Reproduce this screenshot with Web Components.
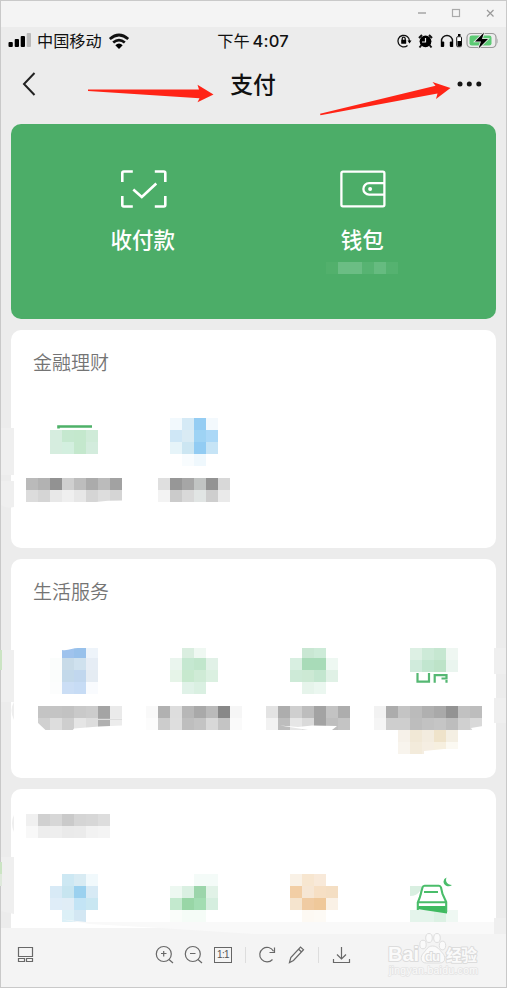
<!DOCTYPE html>
<html lang="zh-CN">
<head>
<meta charset="utf-8">
<title>支付</title>
<style>
html,body{margin:0;padding:0}
body{width:507px;height:988px;overflow:hidden;font-family:"Noto Sans CJK SC",sans-serif}
</style>
</head>
<body>
<viewer-window></viewer-window>
<script>
function define(name, html, after) {
  customElements.define(name, class extends HTMLElement {
    constructor() {
      super();
      this.attachShadow({mode: 'open'}).innerHTML = html;
    }
    connectedCallback() { if (after) after.call(this, this.shadowRoot); }
  });
}

/* Censored tiles: each line is "x y colour colour ..." on a 12px cell grid; "-" skips a cell. */
const CELL = 12;
const PATCHES = {
  wallet: '326 262 #52b06c #6bbd84 #6bbd84 #57b372 #66bb80 #55b270',
  a1: `50 430 #d6eddf #c5e8cf #c4e8cd #cfebd8;50 442 #d6eddf #d3efdf #c4e8cd #d3ecdd;
       26 478 #bababa #b2b2b2 #929292 #cfcfcf #bdbdbd #ababab #bbbbbb #a2a2a2;
       26 490 #dcdcdc #d5d5d5 #e8e8e8 #efefef #e7e7e7 #d5d5d5 #dddddd #d5d5d5`,
  a2: `170 418 #f2f9fd #d5eaf6 #95cdf3 #f3f9fd;170 430 #cfe7f6 #d9ebf4 #9ed3f4 #abd8f7;
       170 442 #e6f4f9 #cce6f2 #92ccf3 #c6e4f6;182 454 #f8fcfe #eff8fd;
       158 478 #dfdfdf #979797 #a6a6a6 #c1c4c3 #939393 #d8d8d8;
       158 490 #f3f3f3 #cbcbcb #d9d9d9 #e1e5e4 #cecece #eaeaea`,
  b1: `50 646 - #9fc3ed #98c1eb #eef4fa;50 658 #fbfdfc #c8dbe8 #cfe1ee #e6edf5;
       50 670 #fbfdfc #c3d9ea #c1d7ee #e5ecf3;50 682 #fcfdfd #cbdef5 #c7dcf5 #f9fbfe;
       38 706 #c4c4c4 #c4c4c4 #c2c2c2 #c9c9c9 #cccccc #a4a4a4 #eaeaea;
       38 718 #d0d0d0 #dddddd #cecece #e5e5e5 #dddddd #b0b0b0 #ececec`,
  b2: `182 648 #daeee0 #eff8f2;170 658 #eaf5ee #c5e8d1 #c1e6cc #e1f1e7;
       170 670 #e6f4e8 #c7e9ce #cfebd6 #dbf0e1;182 682 #e0f2e8 #daf0e2;
       146 706 #f9f9f9 #b1b1b1 #dddddd #b7b7b7 #a9a9a9 #bababa #888888 #f6f6f6;
       146 718 #fcfcfc #cccccc #dedede #bebebe #c3c3c3 #d8d8d8 #c4c4c4 #fafafa`,
  b3: `302 648 #c9e7d3 #cdebd8;290 658 #d8efe1 #a8dbb8 #a8dbb8 #eef8f2;
       290 670 #cdead7 #cce9d4 #c3e6cf #e0f1e6;302 682 #e6f4eb #ebf7f0;
       266 706 #e3e3e3 #adadad #cfcfcf #bdbdbd #a3a3a3 #c3c3c3 #adadad;
       266 718 #f2f2f2 #bdbdbd #e6e6e6 #dadada #a3a3a3 #bebebe #c4c4c4`,
  b4: `410 648 #ddf0e4 #cdead8 #c6e7d1 #eff7f2;410 660 #d0ebdc #c1e6cf #bde3c8 #eaf5ef;
       374 706 #f2f2f2 #acacac #c4c4c4 #bbbbbb #b0b0b0 #a9a9a9 #939393 #c1c1c1 #bdbdbd;
       374 718 #f5f5f5 #cecece #cecece #bdbdbd #c2c2c2 #c5c5c5 #bdbdbd #d0d0d0 #d9d9d9;
       398 730 #f6f1e9 #f1e8d6 #f3ecdf #efe3ca #f4efe3;398 742 #f8f4ed #f3ebdb #f5eee2 #f6efdf #fbf9f2`,
  heading: `26 814 #f0f0f0 #d0d0d0 #d7d7d7 #cacaca #d5d5d5 #d7d7d7 #dddddd;
       26 826 #f8f8f8 #ededed #eeeeee #eaeaea #ebebeb #f2f2f2 #f4f4f4`,
  c1: `62 874 #cde8f3 #d8ebf3 #f1f9fc;50 886 #d8eaf6 #c7e5f0 #9bd1ef #d7eaf5;
       50 898 #dfedf8 #e0edf6 #c3e4f5 #c9e7f2;62 910 #dcf0f7 #d3e7f3`,
  c2: `194 874 #f4fbf8 #f4fbf8;170 886 #edf8f1 #daf0e2 #9cd5ab #e1f2e7;
       170 898 #c3e9ce #98d6a6 #a2ddb2 #d5eedf;170 910 #fafdfa #f5fcf7 #f5fcf7`,
  c3: `290 874 #f9f1e6 #f7e6d0 #f8e9d9;290 886 #f2cea5 #f6e6d4 #f6dfc4 #f4dec3;
       290 898 #f5e4ce #f0cba2 #efc89a #faf1e6;302 910 #fdf9f3 #fdfaf5`,
  c4: `410 886 #d9efe1;410 910 #e4f4eb #e4f4eb #dcf1e4 #eff8f3`
};
const EXTRAS = {
  a1: '<path d="M58.500 428.500v-2H92" fill="none" stroke="#4eb168" stroke-width="2.600"/><path d="M96 502l12-1.300 15-.3v3H96z" fill="#fff"/>',
  b1: '<path d="M60 645h38v3H78c-5 0-10 3-16 2z" fill="#fff"/><path d="M37 722l9 8.500h-9zM72 731l2-2.500 25-2 23-1v6z" fill="#fff"/><path d="M92 719.500h30" stroke="#ddd"/>',
  b3: '<path d="M280 725.500l18 1.500 14-1.500 25 .5-5 4h-24l-6-1z" fill="#fff"/>',
  b4: '<g fill="none" stroke="#55b873" stroke-width="2.200"><path d="M417.500 673v8.700h11.500V673M434.700 682.800v-7.700h12.500M446.500 674v4.500h-5M446.500 680v2.800"/></g><path d="M471 728l12-2v5h-10zM424 754v-3l20-2h16v6z" fill="#fff"/>',
  c4: '<path d="M422 885v10q-4 2-12 3h12z" fill="#fff"/><path d="M410 898v-2q7 0 10-5v7z" fill="#fff"/><path d="M417 909l30 4.500v-7.500h-30z" fill="#3fba60"/><g fill="none" stroke="#4abd6a" stroke-width="2.100"><path d="M417.800 910v-7.500l2-5 2.700-10q.5-1.800 2-1.800h14.500q1.500 0 2 1.800l1.500 6.500 3.700 8v10M424 892h14M418.500 902.300h27"/></g><path d="M446.500 877.500c-1.500 4 .5 7 5.500 7.500-3 2.500-8.500 1-8.500-3.500q.2-3 3-4z" fill="#4abd6a"/>'
};

define('mosaic-patch', `<style>:host{display:block}svg{display:block}</style><svg></svg>`, function (root) {
  const name = this.getAttribute('name');
  const box = this.getAttribute('box').split(' ');
  const svg = root.querySelector('svg');
  svg.setAttribute('viewBox', box.join(' '));
  svg.setAttribute('width', box[2]);
  svg.setAttribute('height', box[3]);
  svg.innerHTML = '<g shape-rendering="crispEdges">' + PATCHES[name].split(';').map(line => {
    const [x, y, ...colours] = line.trim().split(/\s+/);
    return colours.map((c, i) => c === '-' ? '' :
      `<rect x="${+x + i * CELL}" y="${y}" width="12" height="12" fill="${c}"/>`).join('');
  }).join('') + '</g>' + (EXTRAS[name] || '');
});

define('title-bar', `
<style>:host{display:block;height:26px;background:#f4f4f4}
div{display:flex;justify-content:flex-end;padding-right:9px;height:24px;align-items:center}
svg{display:block}</style>
<div><svg width="84" height="24" viewBox="413 1 84 24" fill="none" stroke="#aaa">
<path d="M418 13h8" stroke-width="1.600"/><rect x="452.500" y="9.500" width="7" height="7" stroke-width="1.200"/><path d="M487 10l6.500 6.500M493.500 10L487 16.500" stroke="#999" stroke-width="1.200"/></svg></div>`);

define('status-bar', `
<style>:host{display:grid;grid-template-columns:1fr auto 1fr;align-items:center;height:28px;padding:0 8px 0 7px;color:#111;font-size:16.2px;line-height:28px}
.l{display:flex;align-items:center}.l span{margin:-2px 6px 0 6px}.m{margin-top:-3px}.r{justify-self:end}svg{display:block}
b{font:500 16.500px Inter,"Noto Sans CJK SC",sans-serif;letter-spacing:.15px;margin-left:3px}</style>
<div class="l"><svg width="23" height="16" viewBox="8 33 23 16"><rect x="8.500" y="42" width="4.300" height="5" rx="1"/><rect x="14.700" y="39" width="4.300" height="8" rx="1"/><rect x="20.700" y="36" width="4.300" height="11" rx="1"/><rect x="26.700" y="33" width="4.300" height="14" rx="1" fill="#bbb"/></svg>
<span>中国移动</span>
<svg width="22" height="17" viewBox="0 0 22 17"><g fill="none" stroke="#111" stroke-width="2.700"><path d="M1.800 6Q11-2 20.200 6M5.200 9.600q5.800-5 11.600 0"/></g><path d="M7.300 12.300q3.700-3.400 7.400 0L11 16z"/></svg></div>
<span class="m">下午<b>4:07</b></span>
<svg class="r" width="103" height="20" viewBox="395 31 103 20">
<g fill="none" stroke="#111" stroke-width="1.300"><path d="M407.500 45.500a5.800 5.800 0 1 1 2-4.500"/><path d="M402.200 40v-1.300a1.500 1.500 0 0 1 3 0V40"/></g><rect x="401.200" y="39.800" width="5" height="4" rx=".6"/><path d="M407.500 40.500h4l-2 3z"/>
<circle cx="425.500" cy="41.300" r="5.900"/><path d="M422 35l-3 3M429 35l3 3M421.500 45l-2 2.500M429.500 45l2 2.500" stroke="#111" stroke-width="2"/><path d="M425.500 38v4H422" fill="none" stroke="#ececec" stroke-width="1.200"/>
<path d="M442 46h-.5v-5a5.400 5.400 0 0 1 11 0v5h-.5" fill="none" stroke="#111" stroke-width="1.400"/><rect x="441" y="41.500" width="3.200" height="5.500" rx="1"/><rect x="449.800" y="41.500" width="3.200" height="5.500" rx="1"/>
<rect x="456.700" y="36.700" width="4.800" height="10" rx="1" fill="#fff" stroke="#111"/><path d="M457.500 41h3.500v5h-3.500zM458 34h2.500v2H458z"/>
<rect x="467" y="33.500" width="29" height="14" rx="4" fill="none" stroke="#999" stroke-width="1.200"/><rect x="469.500" y="35.500" width="22" height="10" rx="2.300" fill="#5cca74"/><path d="M497.500 38.500q1.500 2.500 0 5z" fill="#999"/>
<path d="M484 32.500l-9 9h6l-2.500 7 9.500-9.500h-6z" stroke="#ececec" stroke-width="1.600" paint-order="stroke"/></svg>`);

define('nav-bar', `
<style>:host{display:grid;grid-template-columns:1fr auto 1fr;align-items:center;height:58px;padding:0 23px 0 20px;color:#111}
h1{margin:-1px 0 0 2px;font-size:22.800px;font-weight:500;line-height:58px}svg{display:block}.m{justify-self:end}</style>
<svg width="18" height="26" viewBox="21 71 18 26"><path d="M34.500 73L24 84l10.500 11" fill="none" stroke="#222" stroke-width="2"/></svg>
<h1><slot></slot></h1>
<svg class="m" width="27" height="8" viewBox="456 80 27 8" fill="#151515"><circle cx="460" cy="84" r="2.500"/><circle cx="469.300" cy="84" r="2.500"/><circle cx="478.800" cy="84" r="2.500"/></svg>`);

define('pay-entry', `
<style>:host{display:flex;flex-direction:column;align-items:center;color:#fff;font-size:21.500px;font-weight:500;line-height:30px}
.i{height:38px;margin-top:46px}.t{margin-top:16px;margin-bottom:1px}::slotted(svg){display:block}</style>
<div class="i"><slot name="icon"></slot></div><div class="t"><slot></slot></div><slot name="note"></slot>`);

define('pay-card', `
<style>:host{display:grid;grid-template-columns:1fr 1fr;height:195px;padding:0 24px 0 22px;box-sizing:border-box;border-radius:10px;background:#4cad68}
mosaic-patch{margin-top:7px}</style>
<pay-entry><svg slot="icon" width="48" height="38" viewBox="-.8 0 48 38" fill="none" stroke="#fff" stroke-width="2.600"><path d="M2.500 12V3q0-1.500 1.500-1.500h9M35 1.500h9q1.500 0 1.500 1.500v9M2.500 26v9q0 1.500 1.500 1.500h9M35 36.500h9q1.500 0 1.500-1.500v-9M13.500 19.500L22 27 36.500 13.500"/></svg>收付款</pay-entry>
<pay-entry><svg slot="icon" width="48" height="38" viewBox="-.6 0 48 38" fill="none" stroke="#fff" stroke-width="2.300"><rect x="2.800" y="1.700" width="43" height="34.600" rx="1.500"/><path d="M46 13.200H30.500a5.700 5.700 0 0 0 0 11.400H46"/><circle cx="31.500" cy="19" r="2" fill="#fff" stroke="none"/></svg>钱包<mosaic-patch slot="note" name="wallet" box="326 262 73 12"></mosaic-patch></pay-entry>`);

define('service-card', `
<style>:host{display:block;box-sizing:border-box;background:#fff;border-radius:10px;color:#747474;overflow:hidden}
header{height:66px;padding-left:22px;font-size:19px;font-weight:350;line-height:63px}
.row{display:grid;grid-template-columns:repeat(4,120px);padding-left:3px}</style>
<header><slot name="title"></slot></header><div class="row"><slot></slot></div>`);

define('photo-toolbar', `
<style>:host{display:grid;grid-template-columns:50px 99px 29px 29px 30px 14px 30px 29px 15px 30px;height:59px;background:#f4f4f4;align-items:start;box-sizing:border-box;padding-top:15px}
svg{display:block;height:24px;width:100%;fill:none;stroke:#686868;stroke-width:1.200}.sep{width:1px;height:16px;background:#ddd;margin:4px auto 0}
.one{box-sizing:border-box;width:18px;height:16px;border:1px solid #666;margin:4px auto 0;font:10px/14px "Liberation Sans",sans-serif;color:#555;text-align:center;letter-spacing:-.6px}</style>
<svg viewBox="1 943 50 24"><path d="M18.500 947.500h14v9h-14zM18.500 958.500h6v3h-6zM26.500 958.500h6v3h-6z"/></svg><span></span>
<svg viewBox="150 943 29 24"><circle cx="163.800" cy="954" r="7.500"/><path d="M169 959.500l4 3.500M161 953.500h5.500M163.700 951v5.500"/></svg>
<svg viewBox="179 943 29 24"><circle cx="192.800" cy="954" r="7.500"/><path d="M198 959.500l4 3.500M190 953.500h5.500"/></svg>
<div class="one">1:1</div><i class="sep"></i>
<svg viewBox="252 943 30 24"><path d="M272.500 959.500a7.300 7.300 0 1 1 1-8.300M274.500 947.500v5h-5"/></svg>
<svg viewBox="282 943 29 24"><path d="M289.500 962.500l1.300-5 9.700-10.500 3 2.700-10 10.800zM298.500 949l3 3"/></svg><i class="sep"></i>
<svg viewBox="326 943 30 24"><path d="M341.500 947v12M337 954.500l4.500 4.500 4.500-4.500M333.500 959v3.500h16V959"/></svg>`);

define('arrow-notes', `
<style>:host{position:absolute;inset:0;pointer-events:none}svg{display:block}</style>
<svg width="507" height="988" viewBox="0 0 507 988">
<g fill="#efefef"><path d="M1 428h13v47H1zM1 481h13v26q-8 2-13-2zM1 650h13v52H1zM494 648h12v26h-12zM494 698h12v25h-12zM1 857h13v57l-13-3z"/></g>
<path d="M14 702q-5 8 0 18zM14 815q-4 8 0 17z" fill="#eee"/>
<path d="M0 650h2v20H0zM0 862h2v12H0z" fill="#cbe4c3"/><path d="M0 874h2v12H0z" fill="#dfe9dc"/>
<path d="M62 919.500l24 2.500h408v12H254L160 928l-70-4z" fill="#f9f9f9"/><path d="M494 918h12v16h-12z" fill="#efefef"/>
<g fill="#ff2416"><path d="M88 89.600L199 89.500 197.500 84.700 213.500 94.500 197.500 102.300 199.500 98.300 88 91z"/><path d="M320 113.800L435.500 85.700 432.500 82 450.500 88 436 99 437.500 93.500 320.500 115.200z"/></g></svg>`);

define('water-mark', `
<style>:host{position:absolute;left:384px;top:930px}svg{display:block;overflow:visible}text{paint-order:stroke;stroke:#dcdcdc;stroke-width:2px;fill:#fafafa;stroke-linejoin:round}</style>
<svg width="100" height="50" viewBox="384 930 100 50"><g fill="#fafafa" stroke="#dedede"><path d="M432.500 946c-5 0-6 4-9 7s-4 10 3 10h13c7 0 6-7 3-10s-5-7-10-7z"/><ellipse cx="423" cy="944.500" rx="3.200" ry="4.300"/><ellipse cx="429" cy="938" rx="3.300" ry="4.500"/><ellipse cx="437" cy="938" rx="3.300" ry="4.500"/><ellipse cx="442.500" cy="945.500" rx="3.200" ry="4.300"/></g>
<text x="388" y="961" font-family="Liberation Sans" font-weight="700" font-size="20" textLength="31">Bai</text><text x="425" y="960.500" font-family="Liberation Sans" font-weight="700" font-size="13" textLength="15">du</text>
<text x="446" y="960.500" font-family="Noto Sans CJK SC" font-weight="700" font-size="16" textLength="31">经验</text>
<text x="389" y="974" font-family="Liberation Sans" font-size="10.500" textLength="89" style="stroke-width:1.600px;stroke:#e4e4e4">jingyan.baidu.com</text></svg>`);

define('viewer-window', `
<style>:host{display:block;position:relative;box-sizing:border-box;width:507px;height:988px;border:1px solid #c9c9c9;background:#ececec}
main{height:901px;overflow:hidden}.cards{display:grid;gap:11px;padding:11px 10px 0}
.one{height:218px}.two{height:219px}.three{height:149px}
arrow-notes,water-mark{margin:-1px 0 0 -1px}.last{margin-left:-7px;padding-top:25px}</style>
<title-bar></title-bar>
<main><status-bar></status-bar><nav-bar>支付</nav-bar>
<div class="cards"><pay-card></pay-card>
<service-card class="one"><span slot="title">金融理财</span><mosaic-patch name="a1" box="14 396 120 112"></mosaic-patch><mosaic-patch name="a2" box="134 396 120 112"></mosaic-patch></service-card>
<service-card class="two"><span slot="title">生活服务</span><mosaic-patch name="b1" box="14 625 120 130"></mosaic-patch><mosaic-patch name="b2" box="134 625 120 130"></mosaic-patch><mosaic-patch name="b3" box="254 625 120 130"></mosaic-patch><mosaic-patch name="b4" box="374 625 120 130"></mosaic-patch></service-card>
<service-card class="three"><mosaic-patch slot="title" class="last" name="heading" box="26 814 84 24"></mosaic-patch><mosaic-patch name="c1" box="14 855 120 80"></mosaic-patch><mosaic-patch name="c2" box="134 855 120 80"></mosaic-patch><mosaic-patch name="c3" box="254 855 120 80"></mosaic-patch><mosaic-patch name="c4" box="374 855 120 80"></mosaic-patch></service-card></div></main>
<photo-toolbar></photo-toolbar><arrow-notes></arrow-notes><water-mark></water-mark>`);
</script>
</body>
</html>
